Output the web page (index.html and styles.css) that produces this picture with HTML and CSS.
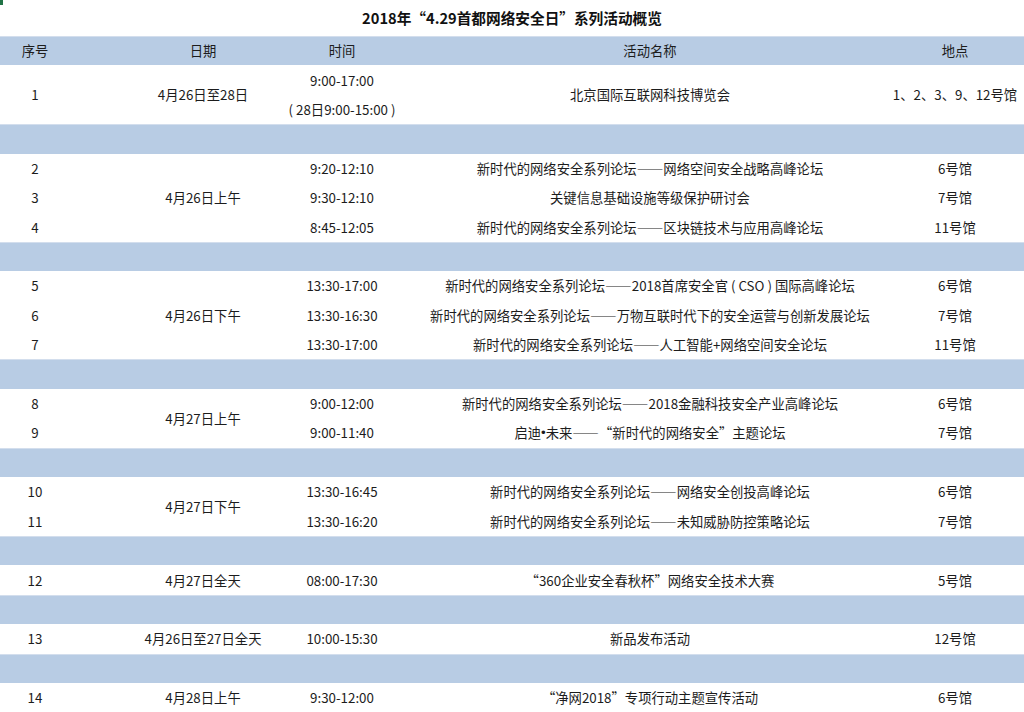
FILE: index.html
```html
<!DOCTYPE html>
<html lang="zh-CN">
<head>
<meta charset="utf-8">
<title>2018年“4.29首都网络安全日”系列活动概览</title>
<link rel="stylesheet" href="styles.css">
</head>
<body>
<div class="sheet">
  <span class="cursor-mark"></span>
  <h1 class="title">2018年“4.29首都网络安全日”系列活动概览</h1>

  <div class="grid head band">
    <div class="c-no">序号</div>
    <div class="c-date">日期</div>
    <div class="c-time">时间</div>
    <div class="c-act">活动名称</div>
    <div class="c-loc">地点</div>
  </div>

  <div class="grid">
    <div class="c-no span2">1</div>
    <div class="c-date span2">4月26日至28日</div>
    <div class="c-time">9:00-17:00</div>
    <div class="c-act span2">北京国际互联网科技博览会</div>
    <div class="c-loc span2">1、2、3、9、12号馆</div>
    <div class="c-time">( 28日9:00-15:00 )</div>
  </div>
  <div class="band"></div>

  <div class="grid">
    <div class="c-date span3">4月26日上午</div>
    <div class="c-no">2</div><div class="c-time">9:20-12:10</div><div class="c-act">新时代的网络安全系列论坛——网络空间安全战略高峰论坛</div><div class="c-loc">6号馆</div>
    <div class="c-no">3</div><div class="c-time">9:30-12:10</div><div class="c-act">关键信息基础设施等级保护研讨会</div><div class="c-loc">7号馆</div>
    <div class="c-no">4</div><div class="c-time">8:45-12:05</div><div class="c-act">新时代的网络安全系列论坛——区块链技术与应用高峰论坛</div><div class="c-loc">11号馆</div>
  </div>
  <div class="band"></div>

  <div class="grid">
    <div class="c-date span3">4月26日下午</div>
    <div class="c-no">5</div><div class="c-time">13:30-17:00</div><div class="c-act">新时代的网络安全系列论坛——2018首席安全官 ( CSO ) 国际高峰论坛</div><div class="c-loc">6号馆</div>
    <div class="c-no">6</div><div class="c-time">13:30-16:30</div><div class="c-act">新时代的网络安全系列论坛——万物互联时代下的安全运营与创新发展论坛</div><div class="c-loc">7号馆</div>
    <div class="c-no">7</div><div class="c-time">13:30-17:00</div><div class="c-act">新时代的网络安全系列论坛——人工智能+网络空间安全论坛</div><div class="c-loc">11号馆</div>
  </div>
  <div class="band"></div>

  <div class="grid">
    <div class="c-date span2">4月27日上午</div>
    <div class="c-no">8</div><div class="c-time">9:00-12:00</div><div class="c-act">新时代的网络安全系列论坛——2018金融科技安全产业高峰论坛</div><div class="c-loc">6号馆</div>
    <div class="c-no">9</div><div class="c-time">9:00-11:40</div><div class="c-act">启迪<span class="dot">•</span>未来——“新时代的网络安全”主题论坛</div><div class="c-loc">7号馆</div>
  </div>
  <div class="band"></div>

  <div class="grid">
    <div class="c-date span2">4月27日下午</div>
    <div class="c-no">10</div><div class="c-time">13:30-16:45</div><div class="c-act">新时代的网络安全系列论坛——网络安全创投高峰论坛</div><div class="c-loc">6号馆</div>
    <div class="c-no">11</div><div class="c-time">13:30-16:20</div><div class="c-act">新时代的网络安全系列论坛——未知威胁防控策略论坛</div><div class="c-loc">7号馆</div>
  </div>
  <div class="band"></div>

  <div class="grid">
    <div class="c-no">12</div><div class="c-date">4月27日全天</div><div class="c-time">08:00-17:30</div><div class="c-act">“360企业安全春秋杯”网络安全技术大赛</div><div class="c-loc">5号馆</div>
  </div>
  <div class="band"></div>

  <div class="grid">
    <div class="c-no">13</div><div class="c-date">4月26日至27日全天</div><div class="c-time">10:00-15:30</div><div class="c-act">新品发布活动</div><div class="c-loc">12号馆</div>
  </div>
  <div class="band"></div>

  <div class="grid">
    <div class="c-no">14</div><div class="c-date">4月28日上午</div><div class="c-time">9:30-12:00</div><div class="c-act">“净网2018”专项行动主题宣传活动</div><div class="c-loc">6号馆</div>
  </div>
</div>
</body>
</html>
```

FILE: styles.css
```css
html, body {
  margin: 0;
  padding: 0;
  background: #ffffff;
  overflow: hidden;
}

.sheet {
  position: relative;
  width: 1024px;
  height: 712px;
  overflow: hidden;
  font-family: "Noto Sans CJK SC", "Noto Sans", sans-serif;
  font-size: 13.33px;
  color: #1c1c1c;
}

.cursor-mark {
  position: absolute;
  left: 0;
  top: 0;
  width: 3px;
  height: 5px;
  background: #217346;
}

.title {
  margin: 0;
  height: 36px;
  line-height: 35px;
  text-align: center;
  font-size: 14.67px;
  font-weight: bold;
  color: #111;
}

.band {
  height: 29.42px;
  background: #b8cce4;
  box-shadow: inset 0 1px 0 #d3deed;
}

.grid {
  display: grid;
  grid-template-columns: 70px 200px 144px 472px 138px;
  grid-auto-rows: 29.42px;
}

.grid > div {
  display: flex;
  align-items: center;
  justify-content: center;
  white-space: nowrap;
}

.dot {
  font-family: "Liberation Sans", sans-serif;
}

.c-no { grid-column: 1; }
.c-date { grid-column: 2; padding-left: 66px; }
.c-time { grid-column: 3; }
.c-act { grid-column: 4; }
.c-loc { grid-column: 5; }

.span2 { grid-row: 1 / span 2; }
.span3 { grid-row: 1 / span 3; }
```
